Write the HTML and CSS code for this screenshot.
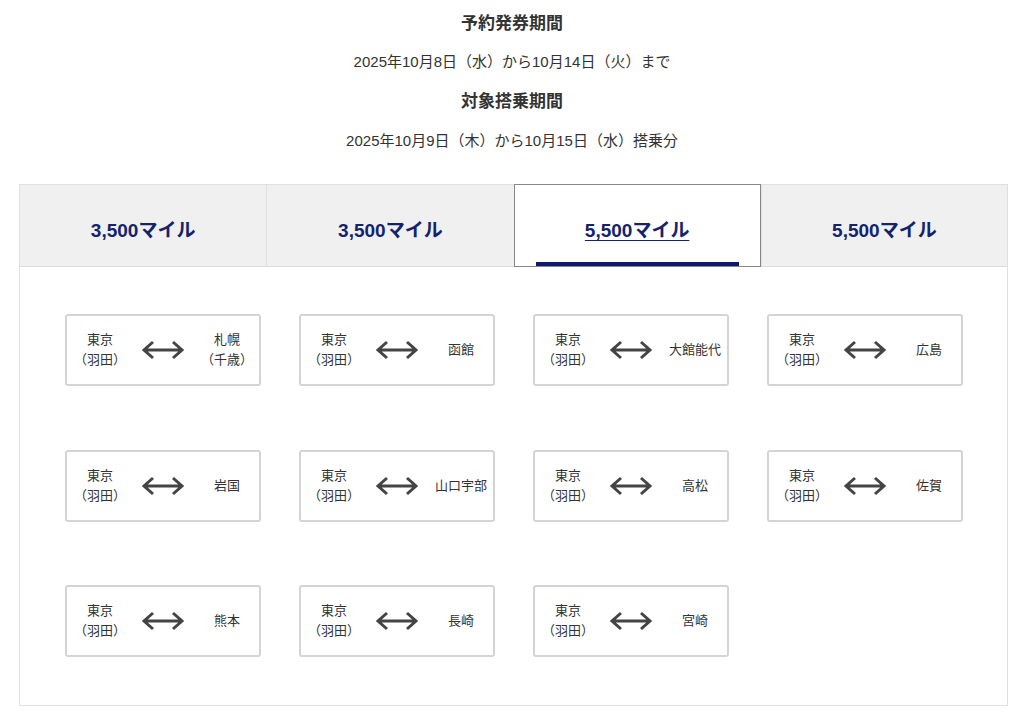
FILE: index.html
```html
<!DOCTYPE html>
<html lang="ja">
<head>
<meta charset="utf-8">
<title>予約発券期間</title>
<link rel="stylesheet" href="styles.css">
</head>
<body>
<section class="period">
  <h2 class="period-title">予約発券期間</h2>
  <p class="period-text">2025年10月8日（水）から10月14日（火）まで</p>
  <h2 class="period-title period-title--second">対象搭乗期間</h2>
  <p class="period-text period-text--second">2025年10月9日（木）から10月15日（水）搭乗分</p>
</section>

<div class="tabs">
  <ul class="tab-list">
    <li class="tab">3,500マイル</li>
    <li class="tab">3,500マイル</li>
    <li class="tab tab--active"><span class="tab-link">5,500マイル</span></li>
    <li class="tab tab--last">5,500マイル</li>
  </ul>
  <div class="panel">
    <div class="route-grid">
      <div class="route"><div class="route-from">東京<br>（羽田）</div><div class="route-arrow"><svg viewBox="0 0 44 20" width="44" height="20"><path d="M3 10H41M12 2L3 10L12 18M32 2L41 10L32 18" fill="none" stroke="#444" stroke-width="3"/></svg></div><div class="route-to">札幌<br>（千歳）</div></div>
      <div class="route"><div class="route-from">東京<br>（羽田）</div><div class="route-arrow"><svg viewBox="0 0 44 20" width="44" height="20"><path d="M3 10H41M12 2L3 10L12 18M32 2L41 10L32 18" fill="none" stroke="#444" stroke-width="3"/></svg></div><div class="route-to">函館</div></div>
      <div class="route"><div class="route-from">東京<br>（羽田）</div><div class="route-arrow"><svg viewBox="0 0 44 20" width="44" height="20"><path d="M3 10H41M12 2L3 10L12 18M32 2L41 10L32 18" fill="none" stroke="#444" stroke-width="3"/></svg></div><div class="route-to">大館能代</div></div>
      <div class="route"><div class="route-from">東京<br>（羽田）</div><div class="route-arrow"><svg viewBox="0 0 44 20" width="44" height="20"><path d="M3 10H41M12 2L3 10L12 18M32 2L41 10L32 18" fill="none" stroke="#444" stroke-width="3"/></svg></div><div class="route-to">広島</div></div>
      <div class="route"><div class="route-from">東京<br>（羽田）</div><div class="route-arrow"><svg viewBox="0 0 44 20" width="44" height="20"><path d="M3 10H41M12 2L3 10L12 18M32 2L41 10L32 18" fill="none" stroke="#444" stroke-width="3"/></svg></div><div class="route-to">岩国</div></div>
      <div class="route"><div class="route-from">東京<br>（羽田）</div><div class="route-arrow"><svg viewBox="0 0 44 20" width="44" height="20"><path d="M3 10H41M12 2L3 10L12 18M32 2L41 10L32 18" fill="none" stroke="#444" stroke-width="3"/></svg></div><div class="route-to">山口宇部</div></div>
      <div class="route"><div class="route-from">東京<br>（羽田）</div><div class="route-arrow"><svg viewBox="0 0 44 20" width="44" height="20"><path d="M3 10H41M12 2L3 10L12 18M32 2L41 10L32 18" fill="none" stroke="#444" stroke-width="3"/></svg></div><div class="route-to">高松</div></div>
      <div class="route"><div class="route-from">東京<br>（羽田）</div><div class="route-arrow"><svg viewBox="0 0 44 20" width="44" height="20"><path d="M3 10H41M12 2L3 10L12 18M32 2L41 10L32 18" fill="none" stroke="#444" stroke-width="3"/></svg></div><div class="route-to">佐賀</div></div>
      <div class="route"><div class="route-from">東京<br>（羽田）</div><div class="route-arrow"><svg viewBox="0 0 44 20" width="44" height="20"><path d="M3 10H41M12 2L3 10L12 18M32 2L41 10L32 18" fill="none" stroke="#444" stroke-width="3"/></svg></div><div class="route-to">熊本</div></div>
      <div class="route"><div class="route-from">東京<br>（羽田）</div><div class="route-arrow"><svg viewBox="0 0 44 20" width="44" height="20"><path d="M3 10H41M12 2L3 10L12 18M32 2L41 10L32 18" fill="none" stroke="#444" stroke-width="3"/></svg></div><div class="route-to">長崎</div></div>
      <div class="route"><div class="route-from">東京<br>（羽田）</div><div class="route-arrow"><svg viewBox="0 0 44 20" width="44" height="20"><path d="M3 10H41M12 2L3 10L12 18M32 2L41 10L32 18" fill="none" stroke="#444" stroke-width="3"/></svg></div><div class="route-to">宮崎</div></div>
    </div>
  </div>
</div>
</body>
</html>
```

FILE: styles.css
```css
* {
  box-sizing: border-box;
}

html, body {
  margin: 0;
  padding: 0;
  background: #fff;
}

body {
  font-family: "Liberation Sans", "Noto Sans CJK JP", sans-serif;
  color: #333;
  width: 1024px;
}

.period {
  padding-top: 12px;
  text-align: center;
}

.period-title {
  margin: 0;
  font-size: 17px;
  line-height: 24px;
  font-weight: 700;
  color: #333;
}

.period-title--second {
  margin-top: 18px;
}

.period-text {
  margin: 16px 0 0;
  font-size: 15px;
  line-height: 20px;
  color: #333;
}

.period-text--second {
  margin-top: 17px;
}

.tabs {
  margin: 33px 0 0 19px;
  width: 989px;
  border: 1px solid #e0e0e0;
  border-top: 0;
}

.tab-list {
  list-style: none;
  margin: 0 -1px;
  padding: 0;
  display: grid;
  grid-template-columns: repeat(4, 1fr);
  height: 83px;
  border-bottom: 1px solid #dcdcdc;
  border-top: 1px solid #e0e0e0;
}

.tab {
  display: flex;
  align-items: center;
  justify-content: center;
  padding-top: 6px;
  background: #f0f0f0;
  border-left: 1px solid #e0e0e0;
  color: #14236b;
  font-size: 19px;
  font-weight: 700;
}

.tab--last {
  border-right: 1px solid #e0e0e0;
}

.tab--active {
  position: relative;
  background: #fff;
  border: 1px solid #888;
  margin-top: -1px;
  margin-bottom: -1px;
}

.tab--active::after {
  content: "";
  position: absolute;
  left: 21px;
  right: 21px;
  bottom: 0;
  height: 4px;
  background: #0d1a6e;
}

.tab-link {
  text-decoration: underline;
  text-underline-offset: 3px;
  text-decoration-thickness: 1px;
}

.panel {
  padding: 47px 44px 48px 45px;
  background: #fff;
}

.route-grid {
  display: grid;
  grid-template-columns: repeat(4, 196px);
  column-gap: 38px;
  row-gap: 63.5px;
  grid-auto-rows: 72px;
}

.route {
  display: grid;
  grid-template-columns: 1fr 1fr 1fr;
  align-items: center;
  border: 2px solid #d4d4d4;
  border-radius: 3px;
  font-size: 13px;
  line-height: 20px;
  color: #333;
  text-align: center;
}

.route-from {
  padding-left: 2px;
}

.route-arrow {
  display: flex;
  justify-content: center;
  align-items: center;
}

.route-arrow svg {
  display: block;
}

.route-to {
  white-space: nowrap;
}
```
